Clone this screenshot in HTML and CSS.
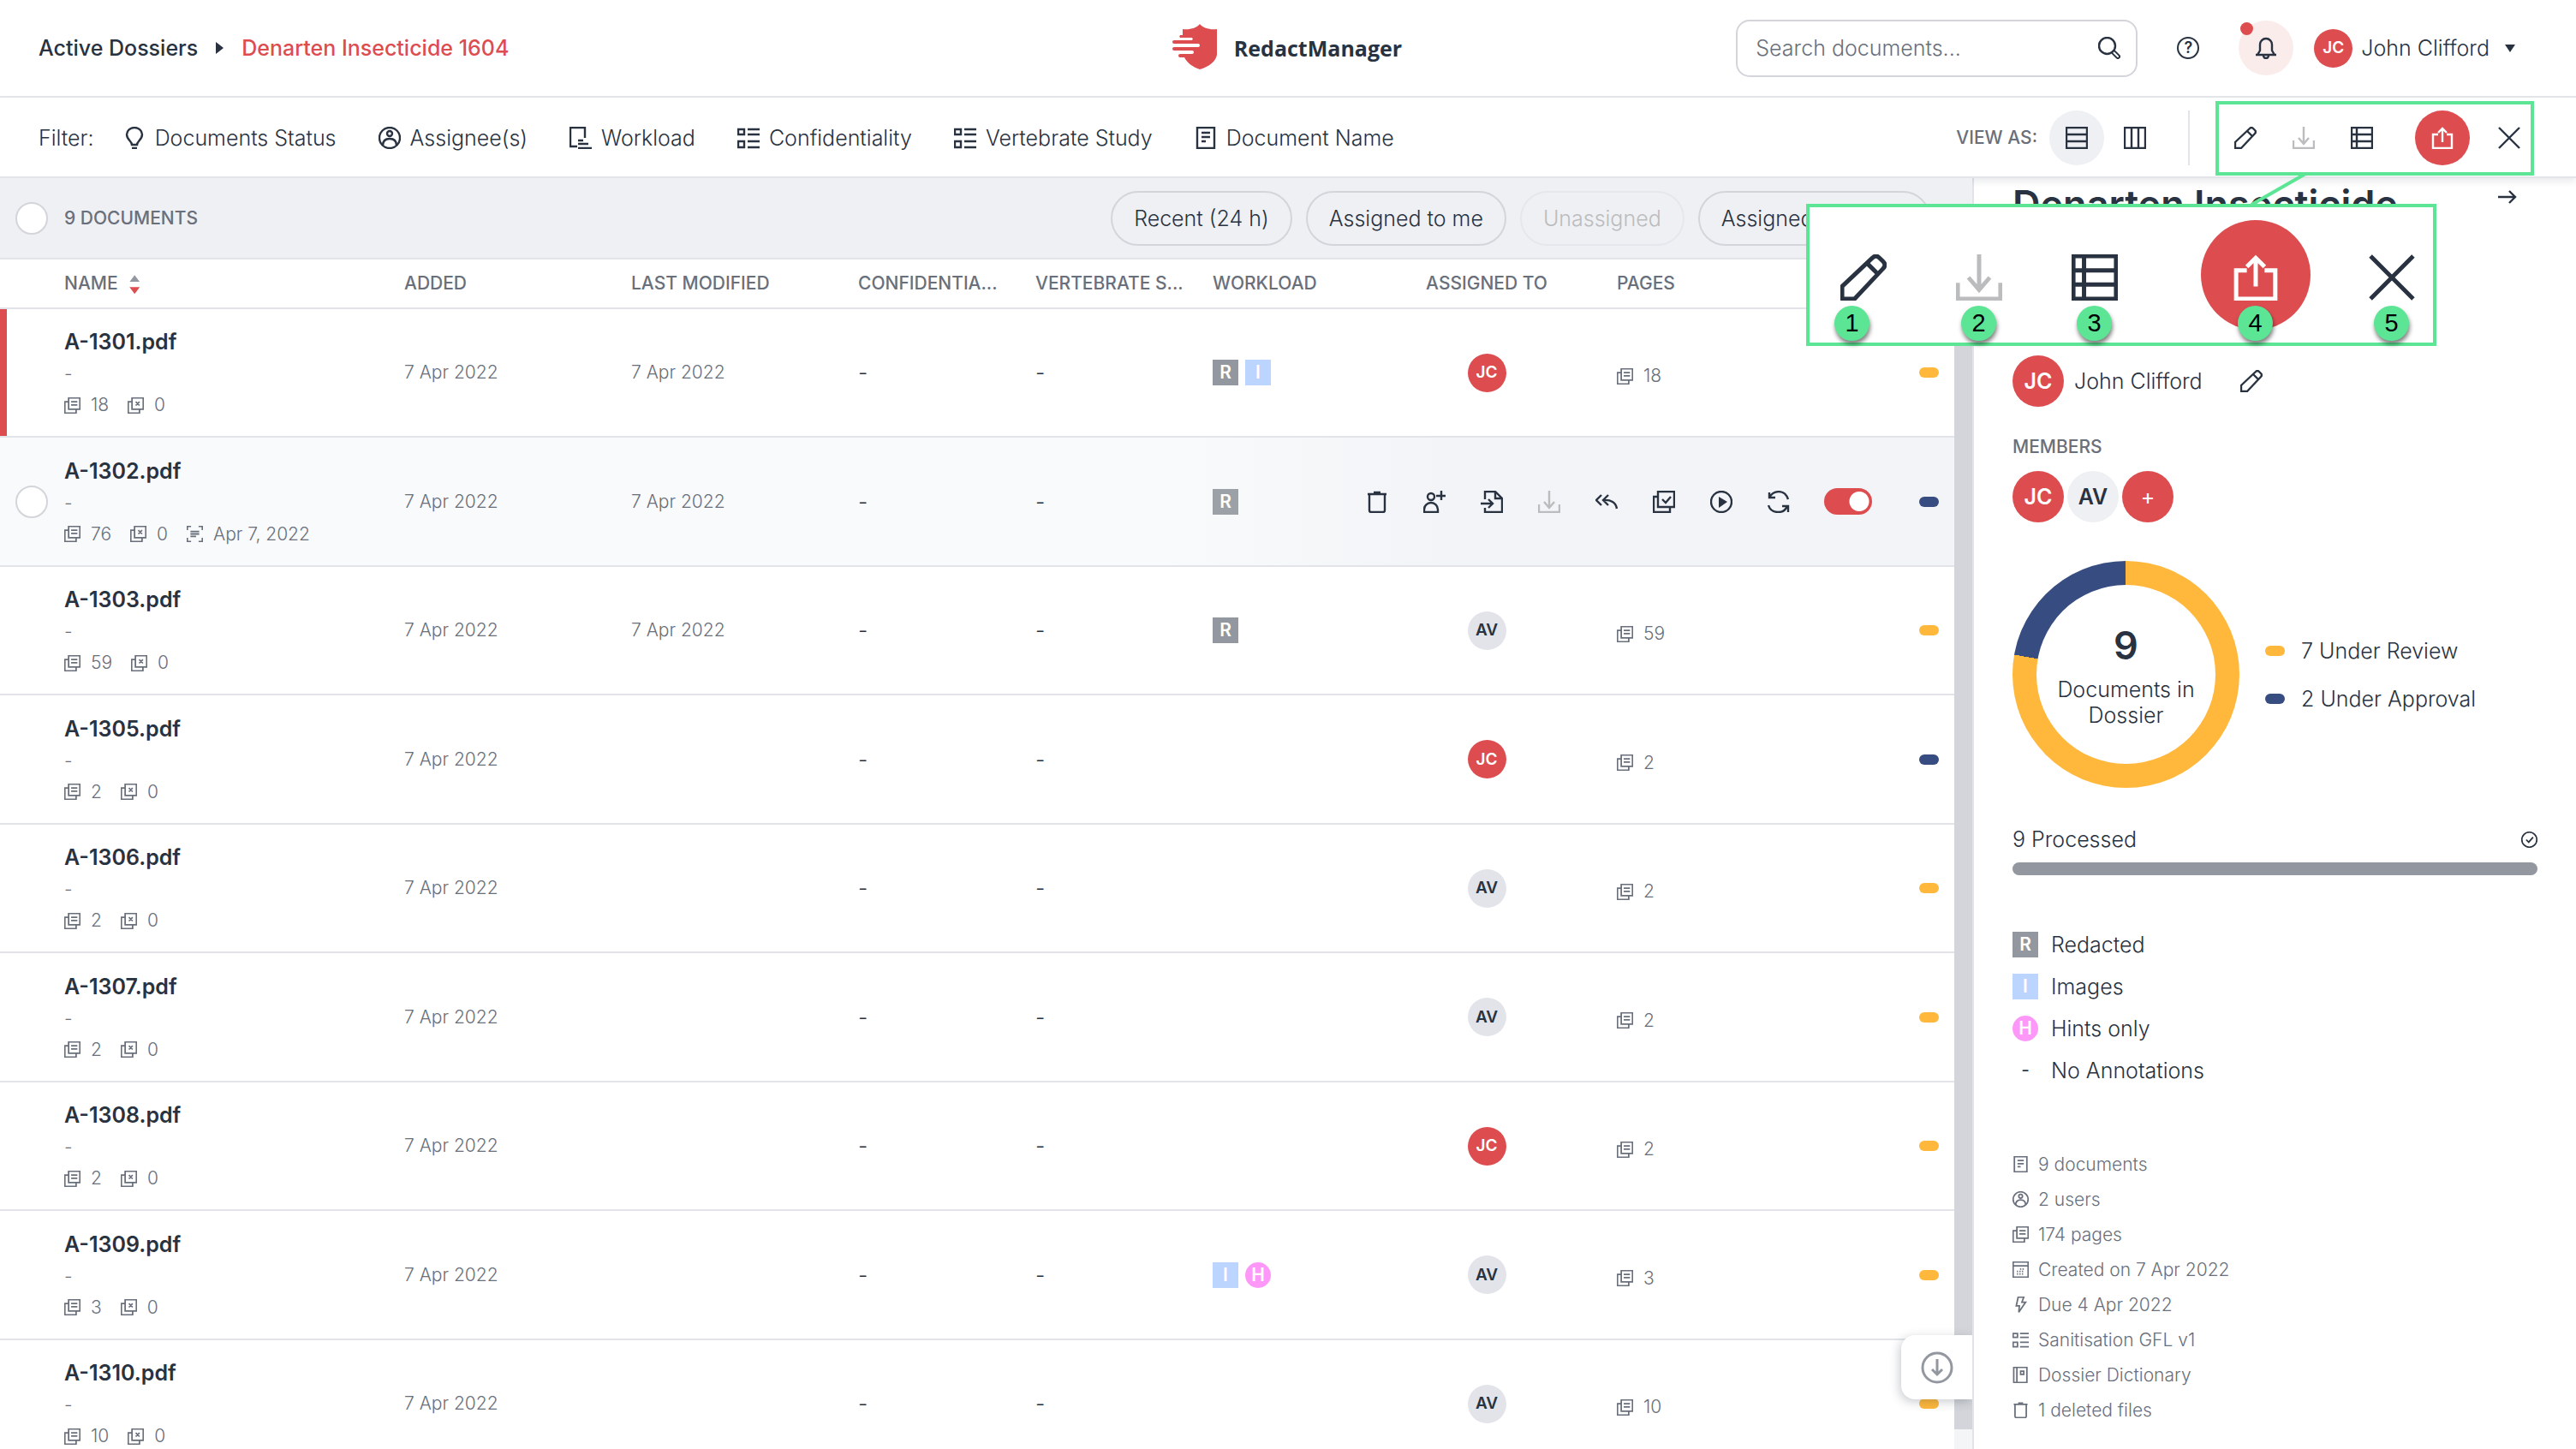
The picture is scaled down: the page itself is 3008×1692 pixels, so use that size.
FILE: index.html
```html
<!DOCTYPE html>
<html lang="en">
<head>
  <meta charset="UTF-8">
  <meta name="viewport" content="width=device-width, initial-scale=1.0">
  <title>RedactManager – Denarten Insecticide 1604</title>
  <link rel="stylesheet" href="styles.css">
</head>
<body>

  <!-- Icon sprite -->
  <svg class="sprite" aria-hidden="true">
    <symbol id="i-logo" viewBox="0 0 52 53"><path fill="currentColor" d="M32 0c4 5 12 7 20 6v30c-1 7-9 14-20 17-9-3-15-8-18-14h-5a2 2 0 0 1 0-4h14a2 2 0 0 0 0-4H2a2 2 0 0 1 0-4h28a2 2 0 0 0 0-4H2a2 2 0 0 1 0-4h21a2 2 0 0 0 0-3H9a2 2 0 0 1 0-3h3V6c8 1 16-1 20-6z"/></symbol>
    <symbol id="i-search" viewBox="0 0 26 26"><circle cx="10.5" cy="10.5" r="9.5"/><path stroke-width="6" stroke-linecap="round" d="M18.5 18.5l4.5 4.5"/><path stroke="#fff" stroke-width="2" stroke-linecap="round" d="M18.5 18.5l4.5 4.5"/></symbol>
    <symbol id="i-bell" viewBox="0 0 26 26"><path d="M3 21l3-5V9a7 7 0 0 1 14 0v7l3 5zM1 21h24M10 22a3 3 0 0 0 6 0"/></symbol>
    <symbol id="i-bulb" viewBox="0 0 26 26"><path d="M10 21c0-4-6-6-6-12a9 8 0 0 1 18 0c0 6-6 8-6 12zM10 25h6"/></symbol>
    <symbol id="i-user" viewBox="0 0 26 26"><circle cx="13" cy="13" r="12"/><circle cx="13" cy="8" r="3"/><path d="M5 22c0-5 3-8 8-8s8 3 8 8"/></symbol>
    <symbol id="i-workload" viewBox="0 0 26 26"><path d="M9 23H1V1h17v12M10 16h6M10 20h12M10 25h16"/></symbol>
    <symbol id="i-list" viewBox="0 0 26 26"><path d="M1 3h7v6H1zM1 17h7v7H1zM12 3h14M12 9h14M12 17h14M12 24h14"/></symbol>
    <symbol id="i-doc" viewBox="0 0 26 26"><path d="M3 1h20v24H3zM8 7h10M8 12h10M8 17h5"/></symbol>
    <symbol id="i-rows" viewBox="0 0 26 26"><path d="M1 1h24v24H1zM1 9h24M1 17h24"/></symbol>
    <symbol id="i-columns" viewBox="0 0 26 26"><path d="M1 1h24v24H1zM9 1v24M17 1v24"/></symbol>
    <symbol id="i-pencil" viewBox="0 0 26 26"><path stroke-linejoin="round" d="M1 25v-7L18 2q2-2 4 0l2 2q2 2 0 4L8 25zM15 5l6 6"/></symbol>
    <symbol id="i-download" viewBox="0 0 26 26"><path d="M13 0v20M7 13l6 7 6-7M1 16v9h24v-9"/></symbol>
    <symbol id="i-table" viewBox="0 0 26 26"><path d="M1 1h24v24H1zM1 9h24M1 17h24M7 1v24"/></symbol>
    <symbol id="i-share" viewBox="0 0 26 26"><path d="M8 9H2v16h22V9h-6M13 18V2M8 7l5-5 5 5"/></symbol>
    <symbol id="i-close" viewBox="0 0 26 26"><path d="M1 1l24 24M25 1L1 25"/></symbol>
    <symbol id="i-arrow" viewBox="0 0 26 26"><path d="M2 13h20M15 6l7 7-7 7"/></symbol>
    <symbol id="i-pages" viewBox="0 0 26 26"><path d="M7 1h18v18H7zM7 7H1v18h18v-6M11 7h10M11 12h10"/></symbol>
    <symbol id="i-pages-x" viewBox="0 0 26 26"><path d="M7 1h18v18H7zM7 7H1v18h18v-6M13 7l6 6M19 7l-6 6"/></symbol>
    <symbol id="i-pages-check" viewBox="0 0 26 26"><path d="M6 1h19v18H6zM6 7H1v18h19v-6M11 10l4 4 6-7"/></symbol>
    <symbol id="i-scan" viewBox="0 0 26 26"><path d="M1 7V1h6M19 1h6v6M25 19v6h-6M7 25H1v-6M6 9h14M6 13h14M6 17h9"/></symbol>
    <symbol id="i-trash" viewBox="0 0 26 26"><path d="M2 4h22M9 2h8M4 4v19q0 2 2 2h14q2 0 2-2V4"/></symbol>
    <symbol id="i-add-user" viewBox="0 0 26 26"><circle cx="9" cy="7" r="4"/><path d="M1 25v-3a8 8 0 0 1 16 0v3zM21 0v11M15 6h11"/></symbol>
    <symbol id="i-import" viewBox="0 0 26 26"><path d="M5 10V1h12l8 8v16H5v-5M17 1v8h8M0 15h14M9 10l5 5-5 5"/></symbol>
    <symbol id="i-reply" viewBox="0 0 26 26"><path d="M7 5l-6 6 6 6M15 5l-6 6 6 6M9 11c9-1 15 3 16 10"/></symbol>
    <symbol id="i-play" viewBox="0 0 26 26"><circle cx="13" cy="13" r="12"/><path fill="currentColor" stroke="none" d="M10 7v13l10-7z"/></symbol>
    <symbol id="i-refresh" viewBox="0 0 26 26"><path d="M2 8C7-1 20-2 24 10M2 2v6h7M1 17c3 10 18 11 22 1M17 18h7v7"/></symbol>
    <symbol id="i-calendar" viewBox="0 0 26 26"><path d="M1 1h24v24H1zM1 7h24"/><path stroke-dasharray="2 2" d="M12 12h8M7 16h12M7 20h10"/></symbol>
    <symbol id="i-bolt" viewBox="0 0 26 26"><path d="M9 1h9l-3 8h6L10 25l1-10H6z"/></symbol>
    <symbol id="i-book" viewBox="0 0 26 26"><path d="M2 1h21v24H2zM7 1v24M13 7h5v5h-5z"/></symbol>
    <symbol id="i-check" viewBox="0 0 26 26"><circle cx="13" cy="13" r="12"/><path d="M8 13l4 4 7-8"/></symbol>
    <symbol id="i-down" viewBox="0 0 38 38"><circle cx="19" cy="19" r="17"/><path d="M19 9v18M13 21l6 6 6-6"/></symbol>
  </svg>

  <header class="topbar">
    <nav class="breadcrumb">
      <a href="#">Active Dossiers</a>
      <span class="caret-right"></span>
      <a href="#" class="current">Denarten Insecticide 1604</a>
    </nav>
    <a href="#" class="brand">
      <svg><use href="#i-logo"/></svg>
      <span>RedactManager</span>
    </a>
    <div class="topbar-right">
      <div class="search">
        <input type="text" placeholder="Search documents..." aria-label="Search documents">
        <button aria-label="Search"><svg class="icon"><use href="#i-search"/></svg></button>
      </div>
      <button class="help" aria-label="Help">?</button>
      <button class="bell" aria-label="Notifications"><svg class="icon"><use href="#i-bell"/></svg></button>
      <button class="account">
        <span class="avatar red">JC</span>
        <span>John Clifford</span>
        <span class="caret-down"></span>
      </button>
    </div>
  </header>

  <div class="filterbar">
    <div class="filters">
      <span class="filter-label">Filter:</span>
      <button><svg class="icon"><use href="#i-bulb"/></svg>Documents Status</button>
      <button><svg class="icon"><use href="#i-user"/></svg>Assignee(s)</button>
      <button><svg class="icon"><use href="#i-workload"/></svg>Workload</button>
      <button><svg class="icon"><use href="#i-list"/></svg>Confidentiality</button>
      <button><svg class="icon"><use href="#i-list"/></svg>Vertebrate Study</button>
      <button><svg class="icon"><use href="#i-doc"/></svg>Document Name</button>
    </div>
    <div class="view-as">
      <span class="label">VIEW AS:</span>
      <button class="round selected" aria-label="List view"><svg class="icon"><use href="#i-rows"/></svg></button>
      <button class="round" aria-label="Board view"><svg class="icon"><use href="#i-columns"/></svg></button>
    </div>
    <div class="dossier-actions">
      <button class="round" aria-label="Edit dossier"><svg class="icon"><use href="#i-pencil"/></svg></button>
      <button class="round" aria-label="Download" disabled><svg class="icon"><use href="#i-download"/></svg></button>
      <button class="round" aria-label="Report"><svg class="icon"><use href="#i-table"/></svg></button>
      <button class="round primary" aria-label="Upload documents"><svg class="icon"><use href="#i-share"/></svg></button>
      <button class="round" aria-label="Close"><svg class="icon"><use href="#i-close"/></svg></button>
    </div>
  </div>

  <div class="layout">
    <main class="list">
      <div class="list-toolbar">
        <input type="checkbox" class="tick" aria-label="Select all documents">
        <span class="label">9 DOCUMENTS</span>
        <div class="quick-filters">
          <button>Recent (24 h)</button>
          <button>Assigned to me</button>
          <button disabled>Unassigned</button>
          <button>Assigned to others</button>
        </div>
      </div>

      <div class="list-body">
        <table>
          <colgroup>
            <col class="c-tick"><col><col class="c-date"><col class="c-date"><col class="c-attr"><col class="c-attr"><col class="c-work"><col class="c-assigned"><col class="c-pages"><col class="c-status">
          </colgroup>
          <thead>
            <tr>
              <th></th>
              <th>NAME <span class="sort"></span></th>
              <th>ADDED</th>
              <th>LAST MODIFIED</th>
              <th>CONFIDENTIA...</th>
              <th>VERTEBRATE S...</th>
              <th>WORKLOAD</th>
              <th class="center">ASSIGNED TO</th>
              <th>PAGES</th>
              <th></th>
            </tr>
          </thead>
          <tbody>
            <tr class="active">
              <td></td>
              <td>
                <a href="#" class="name">A-1301.pdf</a>
                <div class="template">-</div>
                <div class="meta"><svg class="icon"><use href="#i-pages"/></svg><span>18</span><svg class="icon"><use href="#i-pages-x"/></svg><span>0</span></div>
              </td>
              <td>7 Apr 2022</td>
              <td>7 Apr 2022</td>
              <td class="dark">-</td>
              <td class="dark">-</td>
              <td><div class="badges"><span class="badge r">R</span><span class="badge i">I</span></div></td>
              <td><span class="avatar red">JC</span></td>
              <td class="pages"><div class="meta"><svg class="icon"><use href="#i-pages"/></svg><span>18</span></div></td>
              <td><span class="status review"></span></td>
            </tr>
            <tr class="hovered">
              <td><input type="checkbox" class="tick" aria-label="Select A-1302.pdf"></td>
              <td>
                <a href="#" class="name">A-1302.pdf</a>
                <div class="template">-</div>
                <div class="meta"><svg class="icon"><use href="#i-pages"/></svg><span>76</span><svg class="icon"><use href="#i-pages-x"/></svg><span>0</span><svg class="icon"><use href="#i-scan"/></svg><span>Apr 7, 2022</span></div>
              </td>
              <td>7 Apr 2022</td>
              <td>7 Apr 2022</td>
              <td class="dark">-</td>
              <td class="dark">-</td>
              <td><div class="badges"><span class="badge r">R</span></div></td>
              <td colspan="2">
                <div class="row-actions">
                  <button aria-label="Delete"><svg class="icon"><use href="#i-trash"/></svg></button>
                  <button aria-label="Assign user"><svg class="icon"><use href="#i-add-user"/></svg></button>
                  <button aria-label="Import redactions"><svg class="icon"><use href="#i-import"/></svg></button>
                  <button aria-label="Download" disabled><svg class="icon"><use href="#i-download"/></svg></button>
                  <button aria-label="Back to review"><svg class="icon"><use href="#i-reply"/></svg></button>
                  <button aria-label="Approve"><svg class="icon"><use href="#i-pages-check"/></svg></button>
                  <button aria-label="Start analysis"><svg class="icon"><use href="#i-play"/></svg></button>
                  <button aria-label="Reanalyse"><svg class="icon"><use href="#i-refresh"/></svg></button>
                  <input type="checkbox" class="toggle" aria-label="Automatic analysis" checked>
                </div>
              </td>
              <td><span class="status approval"></span></td>
            </tr>
            <tr>
              <td></td>
              <td>
                <a href="#" class="name">A-1303.pdf</a>
                <div class="template">-</div>
                <div class="meta"><svg class="icon"><use href="#i-pages"/></svg><span>59</span><svg class="icon"><use href="#i-pages-x"/></svg><span>0</span></div>
              </td>
              <td>7 Apr 2022</td>
              <td>7 Apr 2022</td>
              <td class="dark">-</td>
              <td class="dark">-</td>
              <td><div class="badges"><span class="badge r">R</span></div></td>
              <td><span class="avatar">AV</span></td>
              <td class="pages"><div class="meta"><svg class="icon"><use href="#i-pages"/></svg><span>59</span></div></td>
              <td><span class="status review"></span></td>
            </tr>
            <tr>
              <td></td>
              <td>
                <a href="#" class="name">A-1305.pdf</a>
                <div class="template">-</div>
                <div class="meta"><svg class="icon"><use href="#i-pages"/></svg><span>2</span><svg class="icon"><use href="#i-pages-x"/></svg><span>0</span></div>
              </td>
              <td>7 Apr 2022</td>
              <td></td>
              <td class="dark">-</td>
              <td class="dark">-</td>
              <td></td>
              <td><span class="avatar red">JC</span></td>
              <td class="pages"><div class="meta"><svg class="icon"><use href="#i-pages"/></svg><span>2</span></div></td>
              <td><span class="status approval"></span></td>
            </tr>
            <tr>
              <td></td>
              <td>
                <a href="#" class="name">A-1306.pdf</a>
                <div class="template">-</div>
                <div class="meta"><svg class="icon"><use href="#i-pages"/></svg><span>2</span><svg class="icon"><use href="#i-pages-x"/></svg><span>0</span></div>
              </td>
              <td>7 Apr 2022</td>
              <td></td>
              <td class="dark">-</td>
              <td class="dark">-</td>
              <td></td>
              <td><span class="avatar">AV</span></td>
              <td class="pages"><div class="meta"><svg class="icon"><use href="#i-pages"/></svg><span>2</span></div></td>
              <td><span class="status review"></span></td>
            </tr>
            <tr>
              <td></td>
              <td>
                <a href="#" class="name">A-1307.pdf</a>
                <div class="template">-</div>
                <div class="meta"><svg class="icon"><use href="#i-pages"/></svg><span>2</span><svg class="icon"><use href="#i-pages-x"/></svg><span>0</span></div>
              </td>
              <td>7 Apr 2022</td>
              <td></td>
              <td class="dark">-</td>
              <td class="dark">-</td>
              <td></td>
              <td><span class="avatar">AV</span></td>
              <td class="pages"><div class="meta"><svg class="icon"><use href="#i-pages"/></svg><span>2</span></div></td>
              <td><span class="status review"></span></td>
            </tr>
            <tr>
              <td></td>
              <td>
                <a href="#" class="name">A-1308.pdf</a>
                <div class="template">-</div>
                <div class="meta"><svg class="icon"><use href="#i-pages"/></svg><span>2</span><svg class="icon"><use href="#i-pages-x"/></svg><span>0</span></div>
              </td>
              <td>7 Apr 2022</td>
              <td></td>
              <td class="dark">-</td>
              <td class="dark">-</td>
              <td></td>
              <td><span class="avatar red">JC</span></td>
              <td class="pages"><div class="meta"><svg class="icon"><use href="#i-pages"/></svg><span>2</span></div></td>
              <td><span class="status review"></span></td>
            </tr>
            <tr>
              <td></td>
              <td>
                <a href="#" class="name">A-1309.pdf</a>
                <div class="template">-</div>
                <div class="meta"><svg class="icon"><use href="#i-pages"/></svg><span>3</span><svg class="icon"><use href="#i-pages-x"/></svg><span>0</span></div>
              </td>
              <td>7 Apr 2022</td>
              <td></td>
              <td class="dark">-</td>
              <td class="dark">-</td>
              <td><div class="badges"><span class="badge i">I</span><span class="badge h">H</span></div></td>
              <td><span class="avatar">AV</span></td>
              <td class="pages"><div class="meta"><svg class="icon"><use href="#i-pages"/></svg><span>3</span></div></td>
              <td><span class="status review"></span></td>
            </tr>
            <tr>
              <td></td>
              <td>
                <a href="#" class="name">A-1310.pdf</a>
                <div class="template">-</div>
                <div class="meta"><svg class="icon"><use href="#i-pages"/></svg><span>10</span><svg class="icon"><use href="#i-pages-x"/></svg><span>0</span></div>
              </td>
              <td>7 Apr 2022</td>
              <td></td>
              <td class="dark">-</td>
              <td class="dark">-</td>
              <td></td>
              <td><span class="avatar">AV</span></td>
              <td class="pages"><div class="meta"><svg class="icon"><use href="#i-pages"/></svg><span>10</span></div></td>
              <td><span class="status review"></span></td>
            </tr>
          </tbody>
        </table>
        <div class="scrollbar"><div class="thumb"></div></div>
      </div>
      <button class="scroll-down" aria-label="Scroll down"><svg><use href="#i-down"/></svg></button>
    </main>

    <aside class="details">
      <div class="title-row">
        <h1>Denarten Insecticide 1604</h1>
        <button class="collapse" aria-label="Collapse details"><svg class="icon"><use href="#i-arrow"/></svg></button>
      </div>

      <div class="label">OWNER</div>
      <div class="owner">
        <span class="avatar large red">JC</span>
        <span class="owner-name">John Clifford</span>
        <button aria-label="Change owner"><svg class="icon"><use href="#i-pencil"/></svg></button>
      </div>

      <div class="label members-label">MEMBERS</div>
      <div class="members">
        <span class="avatar large red">JC</span>
        <span class="avatar large light">AV</span>
        <button class="avatar large red add" aria-label="Add member">+</button>
      </div>

      <div class="chart">
        <div class="donut">
          <div class="donut-center">
            <strong>9</strong>
            <span>Documents in Dossier</span>
          </div>
        </div>
        <ul class="legend">
          <li><span class="status review"></span>7 Under Review</li>
          <li><span class="status approval"></span>2 Under Approval</li>
        </ul>
      </div>

      <div class="processed">
        <span>9 Processed</span>
        <svg class="icon small"><use href="#i-check"/></svg>
      </div>
      <div class="bar"></div>

      <ul class="workload-legend">
        <li><span class="badge r">R</span>Redacted</li>
        <li><span class="badge i">I</span>Images</li>
        <li><span class="badge h">H</span>Hints only</li>
        <li><span class="badge none">-</span>No Annotations</li>
      </ul>

      <ul class="facts">
        <li><svg class="icon small"><use href="#i-doc"/></svg>9 documents</li>
        <li><svg class="icon small"><use href="#i-user"/></svg>2 users</li>
        <li><svg class="icon small"><use href="#i-pages"/></svg>174 pages</li>
        <li><svg class="icon small"><use href="#i-calendar"/></svg>Created on 7 Apr 2022</li>
        <li><svg class="icon small"><use href="#i-bolt"/></svg>Due 4 Apr 2022</li>
        <li><svg class="icon small"><use href="#i-list"/></svg>Sanitisation GFL v1</li>
        <li><a href="#"><svg class="icon small"><use href="#i-book"/></svg>Dossier Dictionary</a></li>
        <li><a href="#"><svg class="icon small"><use href="#i-trash"/></svg>1 deleted files</a></li>
      </ul>
    </aside>
  </div>

  <!-- Magnified toolbar -->
  <div class="frame"></div>
  <svg class="connector" viewBox="0 0 70 36"><path d="M66 0L3 36"/></svg>
  <div class="callout">
    <div class="callout-item"><svg class="icon"><use href="#i-pencil"/></svg><span class="number">1</span></div>
    <div class="callout-item off"><svg class="icon"><use href="#i-download"/></svg><span class="number">2</span></div>
    <div class="callout-item"><svg class="icon"><use href="#i-table"/></svg><span class="number">3</span></div>
    <div class="callout-item primary"><svg class="icon"><use href="#i-share"/></svg><span class="number">4</span></div>
    <div class="callout-item"><svg class="icon"><use href="#i-close"/></svg><span class="number">5</span></div>
  </div>

</body>
</html>
```
FILE: styles.css
```css
* {
  box-sizing: border-box;
}
body {
  margin: 0;
  height: 100vh;
  display: flex;
  flex-direction: column;
  overflow: hidden;
  position: relative;
  background: #fff;
  color: #283241;
  font-family: Inter, "Liberation Sans", sans-serif;
  font-size: 25px;
  font-weight: 300;
  line-height: 30px;
}
a {
  color: inherit;
  text-decoration: none;
}
button {
  display: flex;
  align-items: center;
  padding: 0;
  border: none;
  background: none;
  color: inherit;
  font: inherit;
  cursor: pointer;
}
ul {
  list-style: none;
  margin: 0;
  padding: 0;
}
.sprite {
  position: absolute;
  width: 0;
  height: 0;
}
.icon {
  width: 26px;
  height: 26px;
  flex: none;
  fill: none;
  stroke: currentColor;
  stroke-width: 2.4;
}
.icon.small {
  width: 19px;
  height: 19px;
}
.label {
  color: #696f7b;
  font-size: 21px;
  font-weight: 500;
}

/* top bar */
.topbar {
  flex: none;
  display: grid;
  grid-template-columns: 1fr auto 1fr;
  align-items: center;
  height: 114px;
  padding: 0 71px 0 45px;
  border-bottom: 2px solid #e6e7ea;
}
.breadcrumb {
  display: flex;
  align-items: center;
  font-weight: 500;
}
.caret-right {
  margin: 0 21px;
  border-left: 9px solid #283241;
  border-top: 7px solid transparent;
  border-bottom: 7px solid transparent;
}
.caret-down {
  margin-left: 8px;
  border-top: 9px solid #283241;
  border-left: 6px solid transparent;
  border-right: 6px solid transparent;
}
.current {
  color: #dd4d50;
}
.brand {
  display: flex;
  align-items: center;
  gap: 20px;
  margin-left: 24px;
  font-family: "Open Sans", sans-serif;
  font-weight: 700;
}
.brand svg {
  width: 52px;
  height: 53px;
  margin-bottom: 4px;
  color: #dd4d50;
}
.topbar-right {
  display: flex;
  align-items: center;
  justify-content: flex-end;
}
.search {
  display: flex;
  align-items: center;
  width: 469px;
  height: 67px;
  padding: 0 18px 0 21px;
  border: 2px solid #d3d5da;
  border-radius: 16px;
}
.search input {
  flex: 1;
  min-width: 0;
  border: none;
  outline: none;
  padding: 0;
  background: none;
  color: inherit;
  font: inherit;
}
.search input::placeholder {
  color: #696f7b;
}
.help {
  justify-content: center;
  width: 26px;
  height: 26px;
  margin: 0 46px;
  border: 2px solid #283241;
  border-radius: 50%;
  font-size: 18px;
  font-weight: 600;
}
.bell {
  position: relative;
  justify-content: center;
  width: 64px;
  height: 64px;
  margin-right: 24px;
  border-radius: 50%;
  background: #fbecec;
}
.bell::after {
  content: "";
  position: absolute;
  top: 2px;
  left: 2px;
  width: 15px;
  height: 15px;
  border-radius: 50%;
  background: #dd4d50;
}
.account {
  gap: 10px;
}
.avatar {
  display: flex;
  align-items: center;
  justify-content: center;
  width: 45px;
  height: 45px;
  margin: 0 auto;
  border-radius: 50%;
  background: #e2e4e9;
  color: #283241;
  font-size: 19px;
  font-weight: 600;
}
.avatar.red {
  background: #dd4d50;
  color: #fff;
}
.avatar.light {
  background: #eff0f4;
}
.avatar.large {
  width: 60px;
  height: 60px;
  margin: 0;
  font-size: 25px;
}
.avatar.add {
  font-weight: 400;
}

/* filter bar */
.filterbar {
  position: relative;
  flex: none;
  display: flex;
  align-items: center;
  height: 94px;
  padding: 2px 46px 0 45px;
  border-bottom: 2px solid #e2e4e9;
  box-shadow: 0 4px 8px rgba(40, 50, 65, 0.1);
}
.filters {
  display: flex;
  align-items: center;
  gap: 49px;
  margin-right: auto;
}
.filter-label {
  margin-right: -15px;
}
.filters button {
  gap: 11px;
}
.round {
  justify-content: center;
  width: 64px;
  height: 64px;
  border-radius: 50%;
}
.round.selected {
  background: #eff0f4;
}
.round.primary {
  margin: 0 10px 0 26px;
  background: #dd4d50;
  color: #fff;
}
button:disabled {
  color: #bbbcbd;
}
.view-as {
  display: flex;
  align-items: center;
  gap: 4px;
  padding-right: 30px;
  border-right: 2px solid #e2e4e9;
}
.view-as .label {
  margin-right: 10px;
}
.dossier-actions {
  display: flex;
  gap: 4px;
  padding-left: 33px;
}

/* document list */
.layout {
  flex: 1;
  min-height: 0;
  display: flex;
}
.list {
  position: relative;
  flex: 1;
  min-width: 0;
  display: flex;
  flex-direction: column;
}
.list-toolbar {
  flex: none;
  display: flex;
  align-items: center;
  height: 95px;
  padding: 0 49px 0 18px;
  border-bottom: 2px solid #e2e4e9;
  background: #eff0f4;
}
.tick {
  appearance: none;
  display: block;
  width: 38px;
  height: 38px;
  margin: 0;
  border: 2px solid #d3d5da;
  border-radius: 50%;
  background: #fff;
}
.list-toolbar .tick {
  margin-right: 19px;
}
.quick-filters {
  display: flex;
  gap: 16px;
  margin-left: auto;
}
.quick-filters button {
  height: 64px;
  padding: 0 25px;
  border: 2px solid #d3d5da;
  border-radius: 32px;
}
.quick-filters button:disabled {
  border-color: #e6e7ec;
}
.list-body {
  flex: 1;
  min-height: 0;
  display: flex;
  align-items: flex-start;
  overflow: hidden;
}
table {
  flex: 1;
  width: 100%;
  min-width: 0;
  table-layout: fixed;
  border-collapse: separate;
  border-spacing: 0;
  color: #696f7b;
  font-size: 21px;
}
.c-tick {
  width: 75px;
}
.c-date {
  width: 265px;
}
.c-attr {
  width: 207px;
}
.c-work {
  width: 168px;
}
.c-assigned {
  width: 304px;
}
.c-pages {
  width: 298px;
}
.c-status {
  width: 96px;
}
th {
  height: 58px;
  padding: 0;
  border-bottom: 2px solid #e2e4e9;
  text-align: left;
  white-space: nowrap;
  font-weight: 500;
}
th.center {
  text-align: center;
}
.sort {
  display: inline-block;
  width: 12px;
  height: 22px;
  margin-left: 8px;
  vertical-align: middle;
  background: linear-gradient(#9398a0, #9398a0) top / 100% 8px no-repeat,
    linear-gradient(#dd4d50, #dd4d50) bottom / 100% 8px no-repeat;
  clip-path: polygon(50% 0, 100% 36%, 0 36%, 0 64%, 100% 64%, 50% 100%, 0 64%, 0 36%);
}
td {
  height: 150px;
  padding: 0;
  border-bottom: 2px solid #e2e4e9;
  vertical-align: middle;
}
tr:nth-child(even) td {
  height: 151px;
}
.active td:first-child {
  box-shadow: inset 8px 0 #dd4d50;
}
.hovered {
  background: linear-gradient(to right, #f9fafb 60%, #f3f4f7 74%);
}
.hovered .badge {
  opacity: 0.9;
}
td .tick {
  margin-left: 18px;
}
.dark {
  color: #283241;
  font-size: 25px;
}
.name {
  display: block;
  color: #283241;
  font-size: 25px;
  font-weight: 600;
  line-height: 38px;
}
.template {
  line-height: 38px;
}
.meta {
  display: flex;
  align-items: center;
  height: 34px;
}
.meta .icon {
  width: 19px;
  height: 19px;
  margin-right: 12px;
}
.meta span {
  margin-right: 22px;
}
.pages {
  padding-top: 8px;
}
.badges {
  display: flex;
  gap: 8px;
}
.badge {
  display: flex;
  align-items: center;
  justify-content: center;
  width: 30px;
  height: 30px;
  color: #fff;
  font-size: 21px;
  font-weight: 600;
}
.badge.r {
  background: #9398a0;
}
.badge.i {
  background: #bbd5ff;
}
.badge.h {
  border-radius: 50%;
  background: #fd98f8;
}
.badge.none {
  color: #283241;
  font-weight: 400;
}
.status {
  display: block;
  width: 23px;
  height: 12px;
  border-radius: 6px;
}
td .status {
  margin-left: 55px;
}
.status.review {
  background: #ffb83b;
}
.status.approval {
  background: #374c81;
}
.row-actions {
  display: flex;
  align-items: center;
  justify-content: flex-end;
  gap: 4px;
  color: #283241;
}
.row-actions button {
  flex: none;
  justify-content: center;
  width: 63px;
  height: 64px;
}
.toggle {
  appearance: none;
  flex: none;
  width: 56px;
  height: 31px;
  margin: 0 0 0 18px;
  border-radius: 16px;
  background: radial-gradient(circle at 41px 50%, #fff 11px, #dd4d50 12px);
}
.scrollbar {
  flex: none;
  align-self: stretch;
  width: 21px;
  padding-bottom: 23px;
  background: #f4f5f7;
}
.thumb {
  height: 100%;
  background: #d3d5da;
}
.scroll-down {
  position: absolute;
  right: 0;
  bottom: 58px;
  justify-content: center;
  width: 83px;
  height: 75px;
  border-radius: 16px 0 0 16px;
  background: #fff;
  box-shadow: -2px 3px 12px rgba(40, 50, 65, 0.25);
  clip-path: inset(-20px 0 -20px -20px);
  color: #9398a0;
}
.scroll-down svg {
  width: 38px;
  height: 38px;
  fill: none;
  stroke: currentColor;
  stroke-width: 3;
}

/* dossier details */
.details {
  flex: none;
  width: 705px;
  padding: 3px 45px 0;
  border-left: 2px solid #e2e4e9;
}
.title-row {
  display: flex;
  align-items: flex-start;
  justify-content: space-between;
  margin-bottom: 48px;
}
h1 {
  max-width: 500px;
  margin: 0;
  font-size: 45px;
  font-weight: 600;
  line-height: 56px;
}
.collapse {
  margin: 6px 22px 0 0;
}
.owner {
  display: flex;
  align-items: center;
  margin-top: 14px;
}
.owner-name {
  margin: 0 44px 0 12px;
}
.members-label {
  margin-top: 32px;
}
.members {
  display: flex;
  gap: 4px;
  margin-top: 13px;
}
.chart {
  display: flex;
  align-items: center;
  gap: 30px;
  margin-top: 45px;
}
.donut {
  display: flex;
  align-items: center;
  justify-content: center;
  width: 265px;
  height: 265px;
  border-radius: 50%;
  background: conic-gradient(#ffb83b 0 280deg, #374c81 280deg);
}
.donut-center {
  display: flex;
  flex-direction: column;
  align-items: center;
  justify-content: center;
  width: 209px;
  height: 209px;
  padding: 0 16px;
  border-radius: 50%;
  background: #fff;
  text-align: center;
}
.donut-center strong {
  margin-bottom: 8px;
  font-size: 45px;
  font-weight: 600;
  line-height: 56px;
}
.legend li {
  display: flex;
  align-items: center;
  gap: 19px;
  height: 56px;
}
.processed {
  display: flex;
  align-items: center;
  justify-content: space-between;
  margin-top: 45px;
}
.bar {
  height: 15px;
  margin-top: 12px;
  border-radius: 8px;
  background: #9398a0;
}
.workload-legend {
  margin-top: 56px;
}
.workload-legend li {
  display: flex;
  align-items: center;
  gap: 15px;
  height: 49px;
}
.facts {
  margin-top: 65px;
  color: #696f7b;
  font-size: 21px;
}
.facts li,
.facts a {
  display: flex;
  align-items: center;
  gap: 11px;
  height: 41px;
}

/* magnified toolbar */
.frame {
  position: absolute;
  top: 118px;
  right: 49px;
  width: 372px;
  height: 87px;
  border: 4px solid #5ce594;
}
.connector {
  position: absolute;
  top: 203px;
  right: 312px;
  width: 70px;
  height: 36px;
  fill: none;
  stroke: #5ce594;
  stroke-width: 4;
}
.callout {
  position: absolute;
  top: 238px;
  right: 163px;
  display: flex;
  align-items: center;
  gap: 55px;
  width: 736px;
  height: 166px;
  padding-left: 23px;
  border: 4px solid #5ce594;
  background: #fff;
}
.callout-item {
  position: relative;
  display: flex;
  align-items: center;
  justify-content: center;
  width: 80px;
  height: 128px;
}
.callout-item .icon {
  width: 54px;
  height: 54px;
  margin-top: 6px;
}
.callout-item.off {
  color: #bbbcbd;
}
.callout-item.primary {
  width: 128px;
  margin-left: 29px;
  border-radius: 50%;
  background: #dd4d50;
  color: #fff;
}
.number {
  position: absolute;
  bottom: -13px;
  left: 50%;
  width: 41px;
  height: 41px;
  margin-left: -21px;
  border-radius: 50%;
  background: #5ce594;
  box-shadow: 1px 4px 5px rgba(0, 0, 0, 0.5);
  color: #000;
  font-family: "Liberation Sans", sans-serif;
  font-size: 29px;
  font-weight: 400;
  line-height: 41px;
  text-align: center;
}
.callout-item:first-child .number {
  left: 34%;
}
```
